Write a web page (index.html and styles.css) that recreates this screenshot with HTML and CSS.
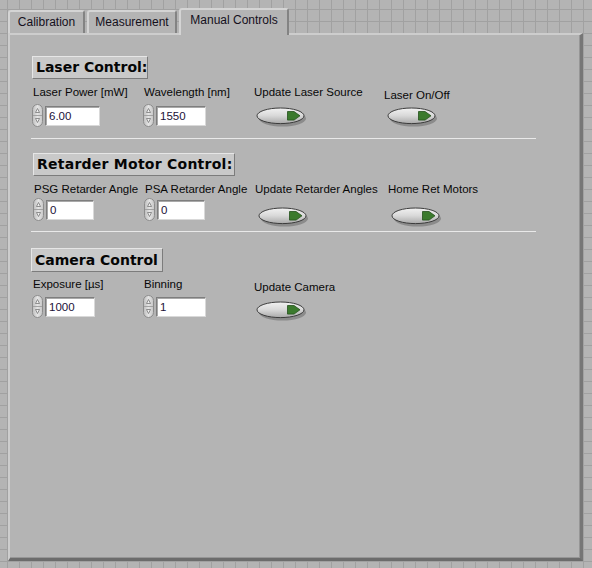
FILE: index.html
```html
<!DOCTYPE html>
<html>
<head>
<meta charset="utf-8">
<link rel="stylesheet" href="styles.css">
</head>
<body>
<svg class="defs" width="0" height="0" aria-hidden="true">
  <defs>
    <linearGradient id="btnFill" x1="0" y1="0" x2="0" y2="1">
      <stop offset="0" stop-color="#f2f2f2"/>
      <stop offset="0.5" stop-color="#d8d8d8"/>
      <stop offset="1" stop-color="#a9a9a9"/>
    </linearGradient>
    <linearGradient id="spinFill" x1="0" y1="0" x2="1" y2="0">
      <stop offset="0" stop-color="#bdbdbd"/>
      <stop offset="0.5" stop-color="#e4e4e4"/>
      <stop offset="1" stop-color="#c6c6c6"/>
    </linearGradient>
  </defs>
</svg>

<div class="tabbar">
  <div class="tab t1">Calibration</div>
  <div class="tab t2">Measurement</div>
  <div class="tab active">Manual Controls</div>
</div>

<div class="panel">
  <div class="content">

    <section class="sec s1">
      <div class="hdr h-laser">Laser Control:</div>
      <div class="row r1">
        <div class="ctl">
          <div class="lbl">Laser Power [mW]</div>
          <div class="num">
            <svg class="spin" width="11" height="23" viewBox="0 0 11 23"><rect x=".5" y=".5" width="10" height="22" rx="5" fill="url(#spinFill)" stroke="#8c8c8c"/><path d="M1 11.5H10" stroke="#a2a2a2"/><path d="M3.5 8.5L5.5 4.5L7.5 8.5Z" fill="#f0f0f0" stroke="#777" stroke-width=".8"/><path d="M3.5 14.5L5.5 18.5L7.5 14.5Z" fill="#f0f0f0" stroke="#777" stroke-width=".8"/></svg>
            <span class="box wide">6.00</span>
          </div>
        </div>
        <div class="ctl">
          <div class="lbl">Wavelength [nm]</div>
          <div class="num">
            <svg class="spin" width="11" height="23" viewBox="0 0 11 23"><rect x=".5" y=".5" width="10" height="22" rx="5" fill="url(#spinFill)" stroke="#8c8c8c"/><path d="M1 11.5H10" stroke="#a2a2a2"/><path d="M3.5 8.5L5.5 4.5L7.5 8.5Z" fill="#f0f0f0" stroke="#777" stroke-width=".8"/><path d="M3.5 14.5L5.5 18.5L7.5 14.5Z" fill="#f0f0f0" stroke="#777" stroke-width=".8"/></svg>
            <span class="box">1550</span>
          </div>
        </div>
        <div class="ctl">
          <div class="lbl">Update Laser Source</div>
          <svg class="btn b-r1" width="52" height="22" viewBox="0 0 52 22"><ellipse cx="26.5" cy="11.5" rx="23.5" ry="8" fill="#6a6a6a" opacity=".55"/><ellipse cx="24.5" cy="8.8" rx="23.5" ry="7.8" fill="url(#btnFill)" stroke="#3c3c3c"/><path d="M31.5 4.5H38L44 8.8L38 13.1H31.5Z" fill="#3b7a2d" stroke="#24501c" stroke-width=".8"/></svg>
        </div>
        <div class="ctl shift">
          <div class="lbl low">Laser On/Off</div>
          <svg class="btn b-r1b" width="52" height="22" viewBox="0 0 52 22"><ellipse cx="26.5" cy="11.5" rx="23.5" ry="8" fill="#6a6a6a" opacity=".55"/><ellipse cx="24.5" cy="8.8" rx="23.5" ry="7.8" fill="url(#btnFill)" stroke="#3c3c3c"/><path d="M31.5 4.5H38L44 8.8L38 13.1H31.5Z" fill="#3b7a2d" stroke="#24501c" stroke-width=".8"/></svg>
        </div>
      </div>
      <div class="sep"></div>
    </section>

    <section class="sec s2">
      <div class="hdr h-ret">Retarder Motor Control:</div>
      <div class="row r2">
        <div class="ctl">
          <div class="lbl">PSG Retarder Angle</div>
          <div class="num">
            <svg class="spin" width="11" height="23" viewBox="0 0 11 23"><rect x=".5" y=".5" width="10" height="22" rx="5" fill="url(#spinFill)" stroke="#8c8c8c"/><path d="M1 11.5H10" stroke="#a2a2a2"/><path d="M3.5 8.5L5.5 4.5L7.5 8.5Z" fill="#f0f0f0" stroke="#777" stroke-width=".8"/><path d="M3.5 14.5L5.5 18.5L7.5 14.5Z" fill="#f0f0f0" stroke="#777" stroke-width=".8"/></svg>
            <span class="box narrow">0</span>
          </div>
        </div>
        <div class="ctl">
          <div class="lbl">PSA Retarder Angle</div>
          <div class="num">
            <svg class="spin" width="11" height="23" viewBox="0 0 11 23"><rect x=".5" y=".5" width="10" height="22" rx="5" fill="url(#spinFill)" stroke="#8c8c8c"/><path d="M1 11.5H10" stroke="#a2a2a2"/><path d="M3.5 8.5L5.5 4.5L7.5 8.5Z" fill="#f0f0f0" stroke="#777" stroke-width=".8"/><path d="M3.5 14.5L5.5 18.5L7.5 14.5Z" fill="#f0f0f0" stroke="#777" stroke-width=".8"/></svg>
            <span class="box narrow">0</span>
          </div>
        </div>
        <div class="ctl">
          <div class="lbl">Update Retarder Angles</div>
          <svg class="btn b-r2" width="52" height="22" viewBox="0 0 52 22"><ellipse cx="26.5" cy="11.5" rx="23.5" ry="8" fill="#6a6a6a" opacity=".55"/><ellipse cx="24.5" cy="8.8" rx="23.5" ry="7.8" fill="url(#btnFill)" stroke="#3c3c3c"/><path d="M31.5 4.5H38L44 8.8L38 13.1H31.5Z" fill="#3b7a2d" stroke="#24501c" stroke-width=".8"/></svg>
        </div>
        <div class="ctl">
          <div class="lbl">Home Ret Motors</div>
          <svg class="btn b-r2" width="52" height="22" viewBox="0 0 52 22"><ellipse cx="26.5" cy="11.5" rx="23.5" ry="8" fill="#6a6a6a" opacity=".55"/><ellipse cx="24.5" cy="8.8" rx="23.5" ry="7.8" fill="url(#btnFill)" stroke="#3c3c3c"/><path d="M31.5 4.5H38L44 8.8L38 13.1H31.5Z" fill="#3b7a2d" stroke="#24501c" stroke-width=".8"/></svg>
        </div>
      </div>
      <div class="sep"></div>
    </section>

    <section class="sec s3">
      <div class="hdr h-cam">Camera Control</div>
      <div class="row r3">
        <div class="ctl">
          <div class="lbl">Exposure [µs]</div>
          <div class="num">
            <svg class="spin" width="11" height="23" viewBox="0 0 11 23"><rect x=".5" y=".5" width="10" height="22" rx="5" fill="url(#spinFill)" stroke="#8c8c8c"/><path d="M1 11.5H10" stroke="#a2a2a2"/><path d="M3.5 8.5L5.5 4.5L7.5 8.5Z" fill="#f0f0f0" stroke="#777" stroke-width=".8"/><path d="M3.5 14.5L5.5 18.5L7.5 14.5Z" fill="#f0f0f0" stroke="#777" stroke-width=".8"/></svg>
            <span class="box">1000</span>
          </div>
        </div>
        <div class="ctl">
          <div class="lbl">Binning</div>
          <div class="num">
            <svg class="spin" width="11" height="23" viewBox="0 0 11 23"><rect x=".5" y=".5" width="10" height="22" rx="5" fill="url(#spinFill)" stroke="#8c8c8c"/><path d="M1 11.5H10" stroke="#a2a2a2"/><path d="M3.5 8.5L5.5 4.5L7.5 8.5Z" fill="#f0f0f0" stroke="#777" stroke-width=".8"/><path d="M3.5 14.5L5.5 18.5L7.5 14.5Z" fill="#f0f0f0" stroke="#777" stroke-width=".8"/></svg>
            <span class="box">1</span>
          </div>
        </div>
        <div class="ctl">
          <div class="lbl low">Update Camera</div>
          <svg class="btn b-r3" width="52" height="22" viewBox="0 0 52 22"><ellipse cx="26.5" cy="11.5" rx="23.5" ry="8" fill="#6a6a6a" opacity=".55"/><ellipse cx="24.5" cy="8.8" rx="23.5" ry="7.8" fill="url(#btnFill)" stroke="#3c3c3c"/><path d="M31.5 4.5H38L44 8.8L38 13.1H31.5Z" fill="#3b7a2d" stroke="#24501c" stroke-width=".8"/></svg>
        </div>
      </div>
    </section>

  </div>
</div>
</body>
</html>
```

FILE: styles.css
```css
html, body {
  margin: 0;
  padding: 0;
}

body {
  width: 592px;
  height: 568px;
  overflow: hidden;
  font-family: "Liberation Sans", Arial, sans-serif;
  color: #0a0a0a;
  background-color: #b4b4b4;
  background-image:
    linear-gradient(to right, #a1a1a1 1px, transparent 1px),
    linear-gradient(to bottom, #a1a1a1 1px, transparent 1px);
  background-size: 12px 12px;
  background-position: 7px 9px;
}

.defs {
  position: absolute;
  width: 0;
  height: 0;
  overflow: hidden;
}

/* ---------- tabs ---------- */
.tabbar {
  display: flex;
  align-items: flex-end;
  gap: 2px;
  height: 25px;
  padding: 8px 0 0 8px;
}

.tab {
  box-sizing: border-box;
  height: 23px;
  display: flex;
  align-items: center;
  justify-content: center;
  font-size: 12px;
  color: #14101c;
  background: #b4b4b4;
  border-top: 2px solid #d4d4d4;
  border-left: 2px solid #d4d4d4;
  border-right: 2px solid #838383;
  border-radius: 3px 3px 0 0;
  padding-bottom: 1px;
}

.t1 { width: 77px; }
.t2 { width: 90px; }

.tab.active {
  width: 110px;
  height: 27px;
  margin-bottom: -2px;
  padding-bottom: 6px;
  position: relative;
  z-index: 1;
}

/* ---------- panel ---------- */
.panel {
  box-sizing: border-box;
  margin-left: 8px;
  width: 575px;
  height: 528px;
  background: #b4b4b4;
  border-top: 2px solid #cdcdcd;
  border-left: 2px solid #cdcdcd;
  border-right: 3px solid #767676;
  border-bottom: 3px solid #6c6c6c;
  box-shadow: inset -1px -1px 0 #969696;
}

.content {
  padding: 21px 0 0 22px;
}

/* ---------- section headers ---------- */
.hdr {
  box-sizing: border-box;
  height: 23px;
  padding-left: 3px;
  font-family: "DejaVu Sans", Verdana, sans-serif;
  font-weight: bold;
  font-size: 14px;
  line-height: 21px;
  color: #050505;
  background: #c9c9c9;
  border: 1px solid;
  border-color: #e6e6e6 #7c7c7c #7c7c7c #e6e6e6;
  white-space: nowrap;
}

.h-laser { width: 116px; }
.h-ret { width: 202px; margin-left: 1px; letter-spacing: 0.25px; }
.h-cam { width: 132px; height: 24px; line-height: 22px; margin-left: -1px; }

.s2 .hdr { margin-top: 14px; }
.s3 .hdr { margin-top: 16px; }

/* ---------- rows ---------- */
.row {
  display: grid;
  grid-template-columns: 111px 110px 133px auto;
}

.r1 { margin-top: 6px; grid-template-columns: 111px 110px 131px auto; }
.r2 { margin-top: 6px; padding-left: 1px; }
.r3 { margin-top: 5px; }

.ctl {
  display: flex;
  flex-direction: column;
  align-items: flex-start;
}

.lbl {
  padding-left: 1px;
  font-size: 11.5px;
  line-height: 14px;
  white-space: nowrap;
  color: #080808;
}

.lbl.low { margin-top: 3px; }

.num {
  display: flex;
  align-items: center;
  gap: 2px;
}

.r1 .num { margin-top: 5px; }
.r2 .num { margin-top: 2px; }
.r3 .num { margin-top: 4px; }

.spin {
  display: block;
  flex: none;
}

.box {
  box-sizing: border-box;
  width: 50px;
  height: 20px;
  padding-left: 3px;
  font-size: 11.5px;
  line-height: 18px;
  color: #1b1238;
  background: #ffffff;
  border: 1px solid;
  border-color: #7e7e7e #d9d9d9 #d9d9d9 #7e7e7e;
  box-shadow: inset 1px 1px 0 #a9a9a9;
}

.box.wide { width: 55px; }
.box.narrow { width: 48px; }

.btn {
  display: block;
  margin-left: 3px;
  margin-bottom: -14px;
}

.b-r1 { margin-top: 8px; }
.b-r1b { margin-top: 5px; margin-left: 4px; }
.b-r2 { margin-top: 11px; margin-left: 4px; }
.b-r3 { margin-top: 7px; }

.shift { margin-left: -1px; }

/* ---------- separators ---------- */
.sep {
  margin-top: 11px;
  width: 505px;
  height: 1px;
  margin-left: -1px;
  background: #e9e9e9;
}

.s2 .sep { margin-top: 10px; }
```
